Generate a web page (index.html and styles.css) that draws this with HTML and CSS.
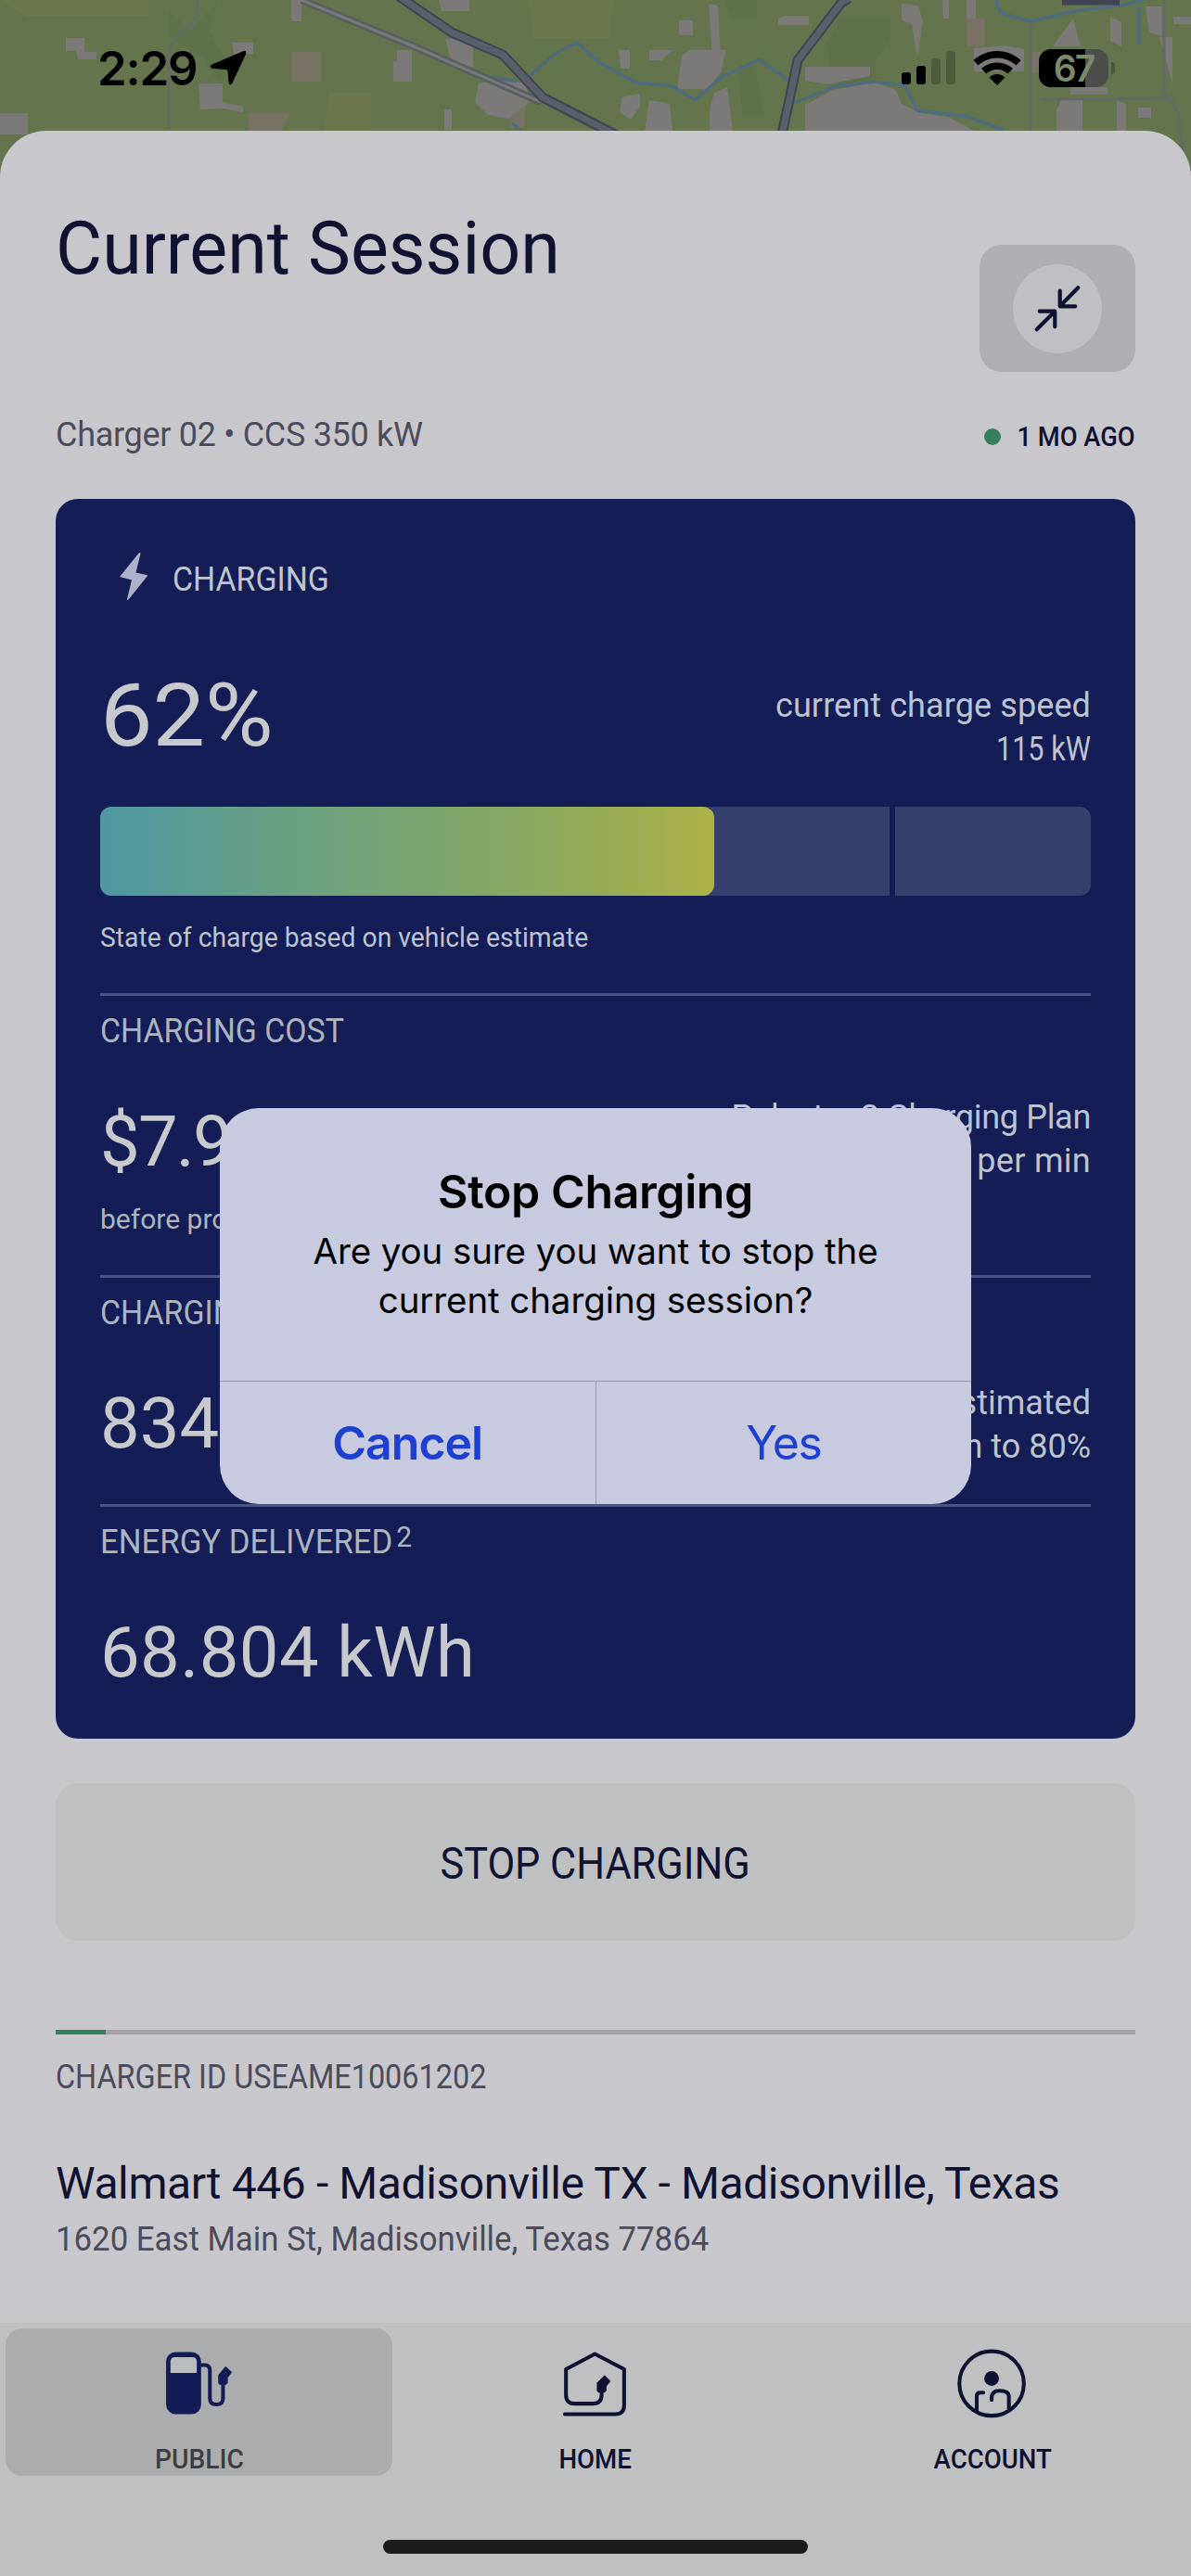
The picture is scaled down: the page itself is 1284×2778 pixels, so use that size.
FILE: index.html
```html
<!DOCTYPE html>
<html lang="en">
<head>
    <meta charset="UTF-8">
    <meta name="viewport" content="width=device-width, initial-scale=1.0">
    <title>Current Session</title>
    <link rel="stylesheet" href="styles.css">
</head>
<body>
    <div class="screen">
        <header class="top">
            <svg class="map" viewBox="0 0 1284 200" width="1284" height="200">
                <rect width="1284" height="200" fill="#64754d"/>
                <g fill="#6c774d">
                    <path d="M569 0h93l-6 42h-80zM355 100h45v42h-50zM0 0h160v18H30z"/>
                </g>
                <g fill="#5f714a">
                    <path d="M182 12l22 20 30-28-8 30 20 36-8 22-20-30-36-22zM905 18h55v26l-16 20v36h-40l-14-50zM795 70h18l12 55h-24zM780 0h36v18h-28z"/>
                </g>
                <g fill="#787264">
                    <path d="M314 56h32v32h-32zM268 122h45l-10 20h-35zM550 110h16v28h-16zM1042 20h20v30h-20zM1110 56h20v22h-20z"/>
                </g>
                <g fill="#7b7a78">
                    <path d="M71 41h20v15h13v8h-20l-2-9h-11zM250 46h23v12h-21zM314 0h11v23h-11zM473 0h33v12h-30zM428 54h16v34h-20V66h4zM214 90h26v20l22 5v6l-20-4-26 1zM0 122h30v23H0zM480 42h18l12 10v20h-22zM479 118h8v22h-8z"/>
                    <path d="M516 90l20-3 30 2 6 20-24 19-22-4-14-14zM732 22h15v16h-15zM735 60l8-6h40l-6 24-14 18h-33zM764 4l10 2 3 56h-9zM839 20l8-3h25v10h-33zM667 54h12v20h-10zM700 54h25l-12 11h-13zM670 105l20-4v14l-10 14-12-8zM700 108l22 4 3 30h-30zM770 100l14-6 6 48h-25v-24zM868 72h70v10l-46 9-24-4z"/>
                    <path d="M868 113l30-16 34-6 8-3 26 9 6 15 20 10 30 4 30 16H868zM972 4l18 2 5 18-6 38-6-36-11-4zM1016 0h7v20h-6zM1042 0h10v20h-10zM1050 52l34-3 20 4v24h-54zM1157 20l8 30h-30zM1197 18l12 6v26l-12-6zM1235 7h18v32l-14-4zM1154 94h40v8h-40zM1145 107h22v35h-28v-24zM1204 108l10 4v30h-10zM1227 116h14v11h-14zM1265 18h19v8h-19zM1250 40h14v50z"/>
                </g>
                <g fill="none" stroke="#4f6c7e" stroke-width="3.500" stroke-linejoin="round">
                    <path d="M524 82L557 88M571 82L598 58L622 46L647 68L686 89L725 93L749 108L778 83L819 64L850 87"/>
                    <path d="M856 111L901 93L942 88L975 92L989 119L1044 126L1081 140M1073 0L1079 14L1111 23L1159 12L1212 5L1233 0M1228 8V48M552 133l10 8"/>
                </g>
                <g fill="none" stroke="#646a66" stroke-width="3">
                    <path d="M182 145V55Q186 40 205 28Q214 18 214 0M1111 23V142M1122 107L1265 106M1255 0V100L1270 120L1280 200"/>
                </g>
                <g fill="none" stroke-linejoin="round">
                    <path d="M325 0L446 50L583 110" stroke="#5b5e60" stroke-width="8"/>
                    <path d="M325 0L446 50L583 110" stroke="#77797a" stroke-width="3"/>
                    <path d="M430 -4L487 35L542 59L585 105L665 146M915 -2L907 3L860 65L843 145M1145 0h62" stroke="#414553" stroke-width="11"/>
                    <path d="M430 -4L487 35L542 59L585 105L665 146M915 -2L907 3L860 65L843 145" stroke="#5a5f6c" stroke-width="7"/>
                </g>
            </svg>
            <div class="status-bar">
                <span class="time">2:29</span>
                <svg class="location" viewBox="0 0 40 38" width="40" height="38"><path d="M37 .8Q40 0 39.200 4L24.500 35.500Q21.500 40 20.500 34.500L19.500 23Q19.300 21.200 17.500 21L3 20Q-1.500 18.500 2.500 15.500Z"/></svg>
                <svg class="signal" viewBox="0 0 58 38" width="58" height="38">
                    <rect x="0" y="24" width="10" height="13" rx="3"/>
                    <rect x="16" y="17" width="10" height="20" rx="3"/>
                    <rect x="32" y="9" width="10" height="28" rx="3" opacity=".22"/>
                    <rect x="48" y="1" width="10" height="36" rx="3" opacity=".22"/>
                </svg>
                <svg class="wifi" viewBox="0 0 52 37" width="52" height="37">
                    <path d="M26 0C36 0 45 4 51.500 10L46.500 15.500C41 10.500 34 7.500 26 7.500S11 10.500 5.500 15.500L.5 10C7 4 16 0 26 0Z"/>
                    <path d="M26 12.500C32.500 12.500 38.500 15 43 19L37.500 24.500C34.500 21.500 30.500 20 26 20S17.500 21.500 14.500 24.500L9 19C13.500 15 19.500 12.500 26 12.500Z"/>
                    <path d="M26 25C29.500 25 32 26.200 34.500 28.500L26 37L17.500 28.500C20 26.200 22.500 25 26 25Z"/>
                </svg>
                <div class="battery"><span>67</span></div>
            </div>
        </header>

        <main class="sheet">
            <div class="title-row">
                <h1>Current Session</h1>
                <button class="collapse">
                    <svg viewBox="0 0 96 96" width="96" height="96">
                        <circle cx="48" cy="48" r="48" fill="#bfc0c3"/>
                        <path d="M70.300 25.300L50.700 45.300M50.700 28.700V45.300H67.300M25.700 70.300L45.300 50.700M28.700 50.700H45.300V67.300" fill="none" stroke="#0f1231" stroke-width="4.200" stroke-linecap="round" stroke-linejoin="round"/>
                    </svg>
                </button>
            </div>
            <div class="info-row">
                <span class="charger">Charger 02 • CCS 350 kW</span>
                <div class="ago"><span>1 MO AGO</span></div>
            </div>

            <section class="card">
                <div class="card-head">
                    <svg class="bolt" viewBox="0 0 30 51" width="30" height="51"><path d="M21 0L0 26L13 29.500L8 50Q8 52 10 50L30 25Q30 24 29 24L17.500 21.500L22.500 1Q22 -.5 21 0Z"/></svg>
                    <span>CHARGING</span>
                </div>
                <div class="row charge">
                    <div class="percent">62%</div>
                    <div class="side">current charge speed<br><span class="speed">115 kW</span></div>
                </div>
                <div class="bar">
                    <div class="limit">
                        <div class="fill"></div>
                    </div>
                    <div class="rest"></div>
                </div>
                <div class="note state">State of charge based on vehicle estimate</div>

                <div class="block cost">
                    <h2>CHARGING COST</h2>
                    <div class="row">
                        <div class="value">$7.92</div>
                        <div class="side">Polestar 2 Charging Plan<br><span class="rate">$0.32 per min</span></div>
                    </div>
                    <div class="note">before promos</div>
                </div>
                <div class="block duration">
                    <h2>CHARGING TIME</h2>
                    <div class="row">
                        <div class="value">834</div>
                        <div class="side">estimated<br>min to 80%</div>
                    </div>
                </div>
                <div class="block energy">
                    <h2>ENERGY DELIVERED<sup>2</sup></h2>
                    <div class="value">68.804 kWh</div>
                </div>
            </section>

            <button class="stop"><span>STOP CHARGING</span></button>

            <div class="progress"><div class="progress-done"></div></div>
            <div class="charger-id">CHARGER ID USEAME10061202</div>
            <div class="place">Walmart 446 - Madisonville TX - Madisonville, Texas</div>
            <div class="address">1620 East Main St, Madisonville, Texas 77864</div>
        </main>

        <nav class="tabs">
            <div class="tab active">
                <svg viewBox="0 0 90 90" width="90" height="90">
                    <rect x="8" y="11" width="40" height="71" rx="11" fill="#141c58"/>
                    <path d="M13 35V22Q13 17 18 17H38Q43 17 43 22V35Z" fill="#b9bdc0"/>
                    <path d="M47 26H52Q58 26 58 32V64Q58 71 65.500 71T73 64V47" fill="none" stroke="#141c58" stroke-width="4.300"/>
                    <path d="M76 28.700L82 34.300L77.500 40V46L76 47.500H69.500L68.500 46V37.700Z" fill="#141c58" stroke="#141c58" stroke-width="2" stroke-linejoin="round"/>
                </svg>
                <span>PUBLIC</span>
            </div>
            <div class="tab">
                <svg viewBox="0 0 90 90" width="90" height="90">
                    <path d="M52 56V60Q52 70 42 70H21Q11.300 70 11.300 60V30.700L44.300 13.300L77.700 30.700V72Q77.700 82 67.700 82H10" fill="none" stroke="#0f1231" stroke-width="4.300" stroke-linecap="round" stroke-linejoin="round"/>
                    <path d="M55.300 38.700L61 44.300L56.500 50V55L55 56.500H48.700L47.500 55V46.700Z" fill="#0f1231" stroke="#0f1231" stroke-width="2" stroke-linejoin="round"/>
                </svg>
                <span>HOME</span>
            </div>
            <div class="tab">
                <svg viewBox="0 0 90 90" width="90" height="90">
                    <g fill="none" stroke="#0f1231" stroke-width="4.300" stroke-linecap="round">
                        <circle cx="44" cy="47" r="36.800"/>
                        <path d="M34.500 57.500H31Q27 57.500 27 61.500V78M44 66V63.500Q44 55.300 53 55.300Q63.700 55.300 63.700 62V76"/>
                    </g>
                    <circle cx="44" cy="41.300" r="8.400" fill="#0f1231"/>
                </svg>
                <span>ACCOUNT</span>
            </div>
        </nav>
        <div class="home-indicator"></div>

        <div class="dialog">
            <div class="dialog-body">
                <h3>Stop Charging</h3>
                <p>Are you sure you want to stop the<br>current charging session?</p>
            </div>
            <div class="dialog-actions">
                <button class="cancel">Cancel</button>
                <button class="yes">Yes</button>
            </div>
        </div>
    </div>
</body>
</html>
```
FILE: styles.css
```css
* {
    box-sizing: border-box;
}
body {
    margin: 0;
    font-family: Roboto, sans-serif;
    color: #0f1231;
    background-color: #bfc0c2;
}
h1, h2, h3, p {
    margin: 0;
    font-weight: 400;
}
button {
    border: none;
    padding: 0;
    font-family: inherit;
    color: inherit;
}
svg {
    display: block;
}
.screen {
    position: relative;
    width: 1284px;
    height: 2778px;
    overflow: hidden;
}

/* map and status bar */
.top {
    position: relative;
    height: 200px;
}
.map {
    position: absolute;
    top: 0;
    left: 0;
}
.status-bar {
    position: relative;
    display: flex;
    align-items: center;
    height: 146px;
    padding: 0 89px 0 105px;
    font-family: Inter, sans-serif;
    font-weight: 600;
    color: #000;
}
.time {
    width: 121px;
    font-size: 51px;
    letter-spacing: -1.3px;
}
.signal {
    margin-left: auto;
}
.wifi {
    margin-left: 19px;
}
.battery {
    position: relative;
    width: 75px;
    height: 41px;
    margin-left: 19px;
    border-radius: 13px;
    background: linear-gradient(90deg, #000 67%, #4b4e4b 67%);
    color: #7b8a6a;
    font-size: 39px;
    line-height: 41px;
    text-align: center;
    letter-spacing: -2px;
}
.battery::after {
    content: "";
    position: absolute;
    right: -7px;
    top: 14px;
    width: 4px;
    height: 13px;
    border-radius: 0 4px 4px 0;
    background-color: #4b5345;
}

/* session sheet */
.sheet {
    position: relative;
    height: 2364px;
    margin-top: -59px;
    padding: 0 60px;
    border-radius: 50px 50px 0 0;
    background-color: #c8c7cb;
}
.title-row {
    display: flex;
    justify-content: space-between;
    align-items: flex-start;
}
h1 {
    margin-top: 79px;
    font-size: 80px;
    line-height: 96px;
    transform: scaleX(0.964);
    transform-origin: left;
}
.collapse {
    display: flex;
    align-items: center;
    justify-content: center;
    width: 168px;
    height: 137px;
    margin-top: 123px;
    border-radius: 24px;
    background-color: #afaeb3;
}
.info-row {
    display: flex;
    justify-content: space-between;
    height: 48px;
    margin-top: 44px;
    line-height: 48px;
}
.charger {
    font-size: 36px;
    letter-spacing: -0.3px;
    color: #4b4b5c;
}
.ago {
    display: flex;
    align-items: center;
    gap: 5px;
    padding-top: 4px;
    font-size: 30px;
    font-weight: 500;
}
.ago::before {
    content: "";
    width: 18px;
    height: 18px;
    border-radius: 50%;
    background-color: #37805a;
}
.ago span {
    transform: scaleX(0.91);
    transform-origin: right;
}

/* charging card */
.card {
    height: 1337px;
    margin-top: 45px;
    padding: 63px 48px 0;
    border-radius: 24px;
    background-color: #141d55;
    color: #c8c9cd;
}
.card-head {
    display: flex;
    align-items: center;
    height: 48px;
    padding-left: 21px;
    gap: 27px;
    font-size: 36px;
    color: #bfc5ce;
}
.card-head span {
    transform: scaleX(0.94);
    transform-origin: left;
}
.bolt {
    margin-bottom: 8px;
    fill: #adb2cb;
}
.row {
    display: flex;
    justify-content: space-between;
    align-items: flex-start;
}
.charge {
    height: 115px;
    margin-top: 67px;
}
.percent {
    font-size: 94px;
    line-height: 112px;
    transform: scaleX(1.07);
    transform-origin: left;
}
.side {
    padding-top: 1px;
    font-size: 36px;
    line-height: 47px;
    text-align: right;
    color: #bdc3cf;
}
.charge .side {
    margin-top: 21px;
    letter-spacing: 0.1px;
}
.speed {
    display: inline-block;
    letter-spacing: 0;
    transform: scaleX(0.85);
    transform-origin: right;
}
.bar {
    display: flex;
    gap: 6px;
    height: 96px;
    margin-top: 39px;
}
.limit {
    width: 851px;
    border-radius: 12px 0 0 12px;
    background-color: #35406c;
}
.fill {
    width: 662px;
    height: 96px;
    border-radius: 12px;
    background: linear-gradient(90deg, #4f97a3, #68a182 31%, #8ba95f 71%, #adb148);
}
.rest {
    flex: 1;
    border-radius: 0 12px 12px 0;
    background-color: #35406c;
}
.note {
    margin-top: 25px;
    font-size: 30px;
    line-height: 40px;
    color: #bdc3cf;
}
.state {
    transform: scaleX(0.943);
    transform-origin: left;
}
.block {
    margin-top: 40px;
    padding-top: 14px;
    border-top: 3px solid #4a5584;
}
h2 {
    font-size: 36px;
    line-height: 48px;
    color: #aeb4bf;
    transform: scaleX(0.94);
    transform-origin: left;
}
.value {
    font-size: 76px;
    line-height: 90px;
}
.cost .row {
    height: 95px;
    margin-top: 45px;
}
.cost .value {
    padding-top: 5px;
    letter-spacing: -1.8px;
}
.cost .side {
    letter-spacing: -0.3px;
}
.cost .rate {
    letter-spacing: 0.3px;
}
.cost .note {
    margin-top: 19px;
    color: #aeb4bf;
}
.duration .row {
    height: 94px;
    margin-top: 49px;
}
.duration .value {
    padding-top: 1px;
}
.energy {
    margin-top: 39px;
}
.energy h2 {
    transform: scaleX(0.965);
}
.energy .value {
    margin-top: 50px;
    letter-spacing: 0.4px;
}
sup {
    margin-left: 4px;
    font-size: 31px;
    line-height: 0;
    vertical-align: 7px;
}

.stop {
    display: block;
    width: 100%;
    height: 170px;
    margin-top: 48px;
    padding-top: 3px;
    border-radius: 24px;
    background-color: #bfc0c2;
    font-size: 48px;
}
.stop span {
    display: inline-block;
    transform: scaleX(0.9);
}
.progress {
    height: 5px;
    margin-top: 96px;
    background-color: #a3a3a8;
}
.progress-done {
    width: 54px;
    height: 5px;
    background-color: #37805a;
}
.charger-id {
    margin-top: 22px;
    font-size: 36px;
    line-height: 48px;
    color: #4b4b5c;
    transform: scaleX(0.9);
    transform-origin: left;
}
.place {
    margin-top: 61px;
    font-size: 48px;
    line-height: 60px;
    letter-spacing: -0.4px;
}
.address {
    margin-top: 6px;
    font-size: 36px;
    line-height: 48px;
    color: #4b4b5c;
    transform: scaleX(0.966);
    transform-origin: left;
}

/* bottom tabs */
.tabs {
    display: grid;
    grid-template-columns: repeat(3, 1fr);
    padding: 6px 0;
}
.tab {
    display: flex;
    flex-direction: column;
    align-items: center;
    height: 159px;
    margin: 0 5px;
    padding-top: 15px;
    font-size: 30px;
    font-weight: 500;
    line-height: 36px;
}
.tab span {
    margin-top: 23px;
    transform: scaleX(0.92);
}
.active {
    margin-left: 6px;
    border-radius: 18px;
    background-color: #abacae;
}
.active svg {
    margin-left: -1px;
}
.active span {
    color: #3d3e40;
    transform: scaleX(0.94);
}
.home-indicator {
    width: 458px;
    height: 15px;
    margin: 63px auto 0;
    border-radius: 8px;
    background-color: #1b1c1e;
}

/* confirm dialog */
.dialog {
    position: absolute;
    top: 1195px;
    left: 237px;
    width: 810px;
    height: 427px;
    border-radius: 42px;
    background-color: #c8cbdf;
    font-family: Inter, sans-serif;
    color: #000;
    overflow: hidden;
}
.dialog-body {
    height: 295px;
    padding-top: 60px;
    border-bottom: 1px solid #9699b4;
    text-align: center;
}
h3 {
    font-size: 50px;
    font-weight: 600;
    line-height: 60px;
    letter-spacing: -0.4px;
}
p {
    padding-top: 8px;
    font-size: 38.500px;
    line-height: 53px;
    letter-spacing: -0.1px;
}
.dialog-actions {
    display: flex;
    height: 132px;
}
.dialog-actions button {
    flex: 1;
    background: none;
    font-size: 50px;
    color: #1c41d2;
}
.dialog-actions .cancel {
    border-right: 1px solid #9699b4;
    font-weight: 600;
    letter-spacing: -1px;
}
.dialog-actions .yes {
    letter-spacing: -1.5px;
}
```
